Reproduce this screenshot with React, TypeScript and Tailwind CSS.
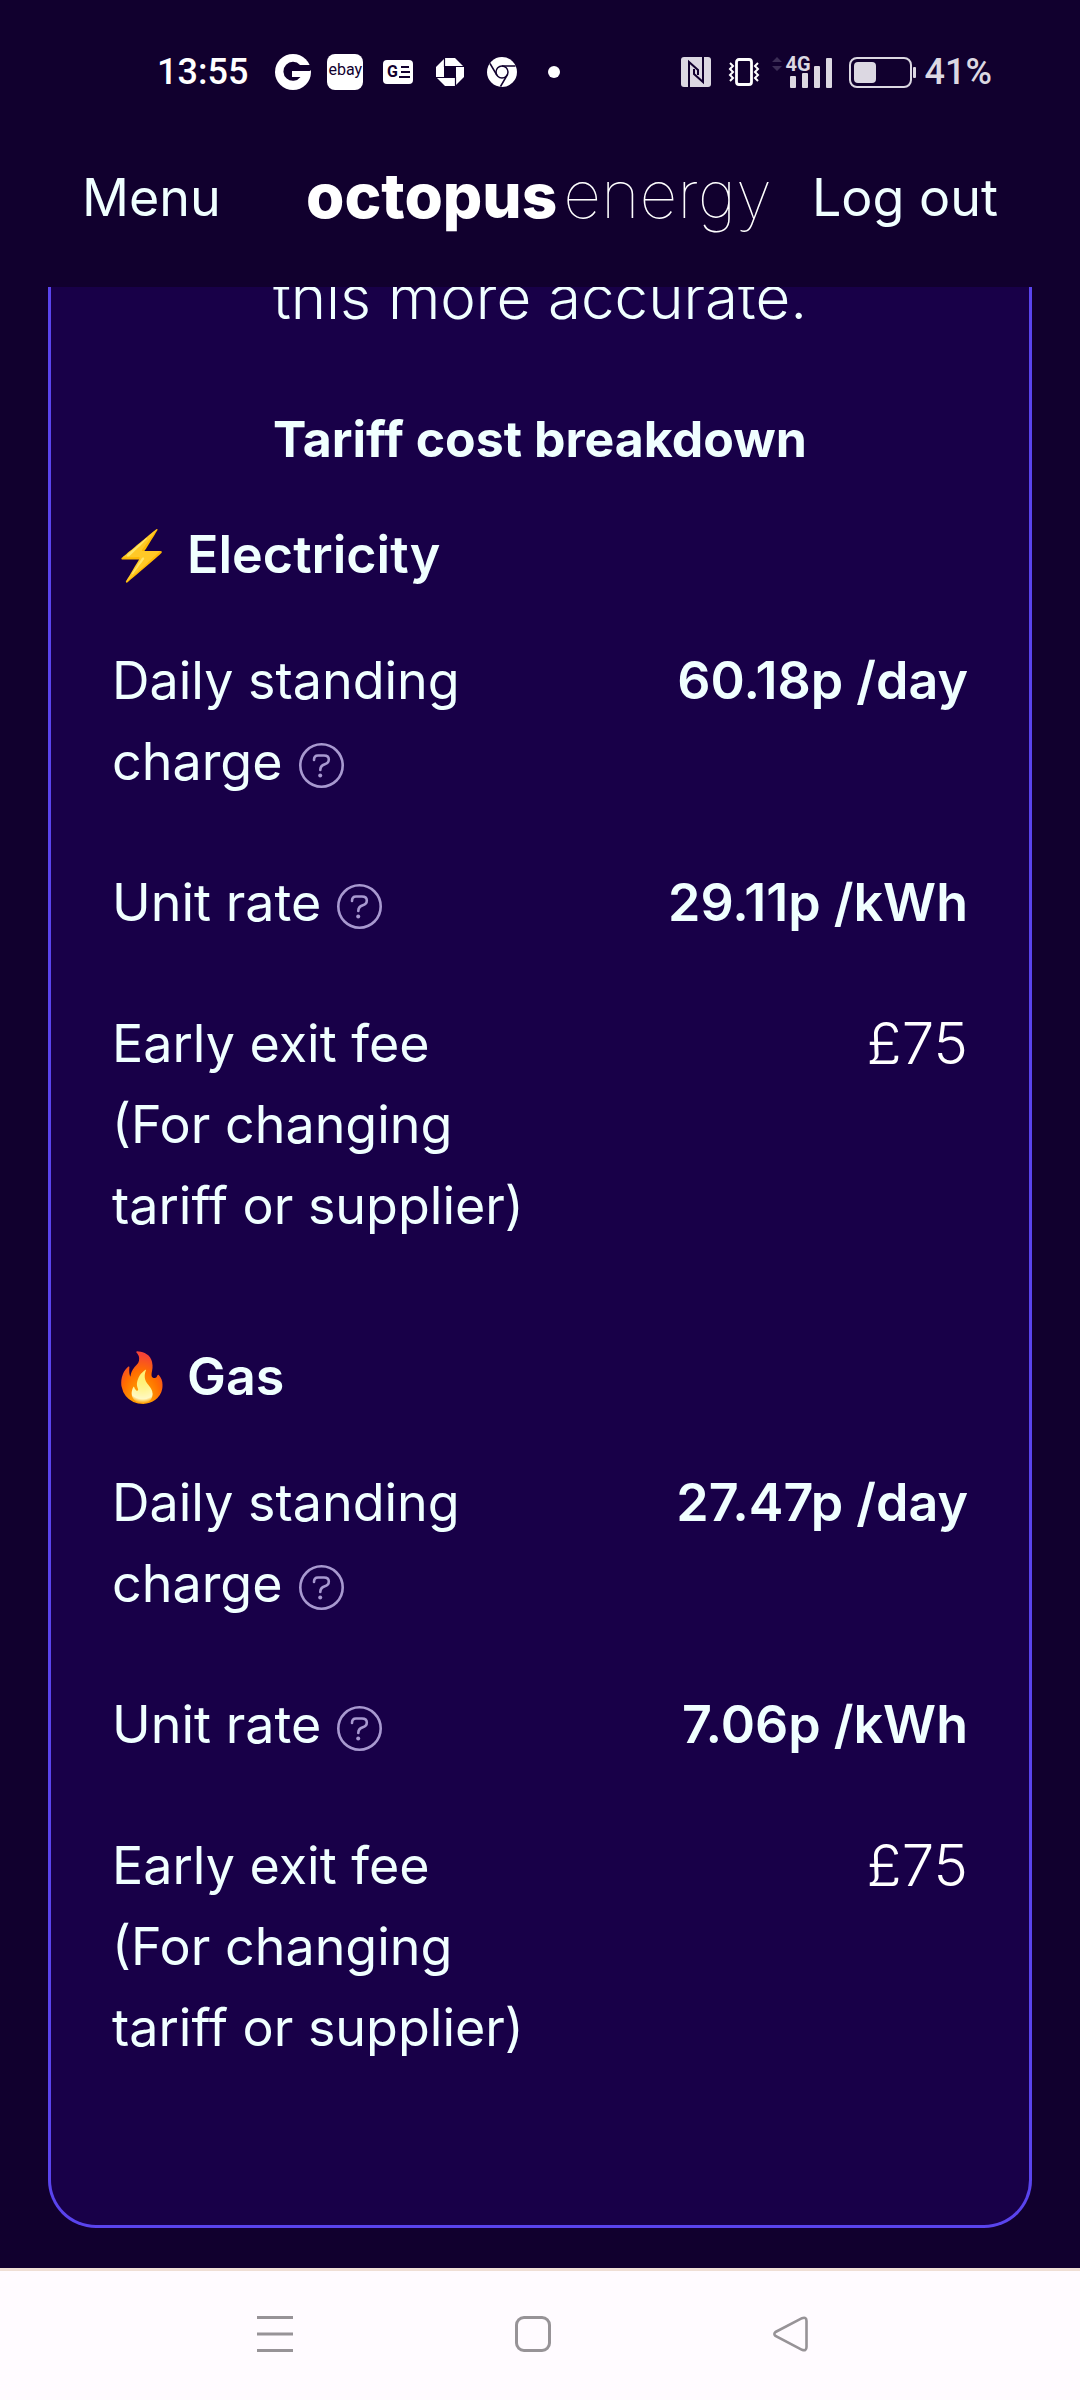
import React from 'react';

interface Rate {
  label: string;
  value: string;
  note?: string;
  help?: boolean;
  light?: boolean;
}

interface Fuel {
  emoji: string;
  name: string;
  rates: Rate[];
}

const EXIT_FEE: Rate = { label: 'Early exit fee', note: '(For changing tariff or supplier)', value: '£75', light: true };

const FUELS: Fuel[] = [
  {
    emoji: '⚡',
    name: 'Electricity',
    rates: [
      { label: 'Daily standing charge', value: '60.18p /day', help: true },
      { label: 'Unit rate', value: '29.11p /kWh', help: true },
      EXIT_FEE,
    ],
  },
  {
    emoji: '🔥',
    name: 'Gas',
    rates: [
      { label: 'Daily standing charge', value: '27.47p /day', help: true },
      { label: 'Unit rate', value: '7.06p /kWh', help: true },
      EXIT_FEE,
    ],
  },
];

const NotificationIcons = () => (
  <div className="flex items-center">
    <svg className="w-9 h-9 mr-4" viewBox="0 0 36 36">
      <circle cx="18" cy="18" r="18" fill="#fff" />
      <path d="M36 11H25a9.5 9.5 0 1 0 .5 12H17v-5.500h17L36 16z" fill="#11002e" />
      <path d="M17 17h18v5.500H17z" fill="#fff" />
    </svg>
    <div className="w-9 h-9 mr-5 rounded-lg bg-white text-[#11002e] text-base leading-8 text-center">ebay</div>
    <div className="w-[30px] h-6 mr-[23px] rounded-sm bg-white text-[#11002e] flex items-center justify-center gap-px">
      <span className="text-base leading-6 font-bold">G</span>
      <svg className="w-[11px] h-3" viewBox="0 0 11 12" stroke="#11002e" strokeWidth="2">
        <path d="M2 1h8M2 6h9M0 11h11" />
      </svg>
    </div>
    <svg className="w-7 h-7 mr-[23px]" viewBox="0 0 28 28">
      <path d="M9 0h10l9 9v10l-9 9H9l-9-9V9z" fill="#fff" />
      <path d="M8 8h12v12H8z" fill="#11002e" />
      <path d="M8.500 0v9M28 8.500H19M19.500 28V19M0 19.500h9" stroke="#11002e" strokeWidth="1.200" />
    </svg>
    <svg className="w-[30px] h-[30px] mr-[31px]" viewBox="0 0 30 30">
      <circle cx="15" cy="15" r="15" fill="#fff" />
      <circle cx="15" cy="15" r="6" fill="none" stroke="#11002e" strokeWidth="1.500" />
      <path d="M15 9H28.500M9.800 18L3 6.500M20.200 18L13.500 29.500" stroke="#11002e" strokeWidth="1.500" />
    </svg>
    <span className="w-3 h-3 rounded-full bg-white" />
  </div>
);

const SystemIcons = () => (
  <div className="flex items-center">
    {/* NFC */}
    <svg className="w-[30px] h-[30px] mr-[17px]" viewBox="0 0 30 30" fill="none">
      <rect width="30" height="30" rx="3" fill="#dcd8e2" />
      <path d="M8 30V5l9 8v5M22 0v25l-9-8v-5" stroke="#11002e" strokeWidth="2" />
    </svg>
    {/* Vibrate */}
    <svg className="w-8 h-[30px] mr-3" viewBox="0 0 32 30" fill="none" stroke="#fff">
      <rect x="8.500" y="2.500" width="15" height="25" rx="2.500" strokeWidth="2.800" />
      <path d="M2 6l3 3-3 3 3 3-3 3 3 3-3 3M30 6l-3 3 3 3-3 3 3 3-3 3 3 3" strokeWidth="2" />
    </svg>
    {/* Mobile signal */}
    <div className="relative w-[61px] h-8 mr-4">
      <svg className="w-full h-full" viewBox="0 0 61 32">
        <path d="M0 6l5-5 5 5zM0 10h10l-5 5z" fill="#3b2d55" />
        <g fill="#dcd8e2">
          <rect x="18" y="20" width="6" height="12" rx="1" />
          <rect x="30" y="17" width="6" height="15" rx="1" />
          <rect x="42" y="10" width="6" height="22" rx="1" />
          <rect x="54" y="2" width="6" height="30" rx="1" />
        </g>
      </svg>
      <span className="absolute left-3.5 -top-0.5 text-xl leading-5 font-bold">4G</span>
    </div>
    <svg className="w-[67px] h-[31px] mr-[9px]" viewBox="0 0 67 31">
      <rect x="1" y="1" width="61" height="29" rx="7" fill="none" stroke="#dcd8e2" strokeWidth="2" />
      <rect x="5" y="5" width="22" height="21" rx="4" fill="#dcd8e2" />
      <rect x="64" y="10" width="3" height="11" rx="1" fill="#dcd8e2" />
    </svg>
    <span className="text-4xl leading-10 font-medium">41%</span>
  </div>
);

const StatusBar = () => (
  <div className="flex items-center justify-between h-36 pl-[157px] pr-[88px] font-['Roboto',sans-serif] text-[#dcd8e2]">
    <div className="flex items-center gap-[27px]">
      <span className="text-4xl leading-10 font-medium text-white">13:55</span>
      <NotificationIcons />
    </div>
    <SystemIcons />
  </div>
);

const HelpButton = ({ label }: { label: string }) => (
  <button type="button" aria-label={`About ${label}`} className="ml-4 align-middle">
    <svg className="w-[45px] h-[45px]" viewBox="0 0 45 45" fill="none" stroke="#a899d0" strokeLinecap="round">
      <circle cx="22.500" cy="22.500" r="21.200" strokeWidth="2.600" />
      <path d="M15 17c0-3 1.500-4.500 4-4.500h6c3 0 4.800 1.500 4.800 4s-1.500 4-4 4.800c-3 .9-4.500 2-4.500 5.700" strokeWidth="2.600" />
      <circle cx="21.200" cy="32.500" r="2" fill="#a899d0" stroke="none" />
    </svg>
  </button>
);

const FuelSection = ({ fuel }: { fuel: Fuel }) => (
  <section>
    <h3 className="mb-[45px] flex items-center font-semibold">
      <span className="w-[75px] text-5xl leading-[81px]">{fuel.emoji}</span>
      {fuel.name}
    </h3>
    <dl className="flex flex-col gap-[60px]">
      {fuel.rates.map(rate => (
        <div key={rate.label} className="flex items-start justify-between">
          <dt className="w-[440px]">
            {rate.label}
            {rate.help && <HelpButton label={rate.label} />}
            {rate.note && <span className="block">{rate.note}</span>}
          </dt>
          {rate.light ? (
            <dd className="text-[58px] font-light text-white">{rate.value}</dd>
          ) : (
            <dd className="font-semibold">{rate.value}</dd>
          )}
        </div>
      ))}
    </dl>
  </section>
);

const NavBar = () => (
  <nav className="flex items-center justify-center gap-[222px] h-[132px] pr-3.5 pb-1 bg-[#fffbff] border-t-3 border-[#efdfd5]">
    <button type="button" aria-label="Recent apps">
      <svg className="w-9 h-9" viewBox="0 0 36 36" stroke="#979397" strokeWidth="3">
        <path d="M0 1.500h36M0 18h36M0 34.500h36" />
      </svg>
    </button>
    <button type="button" aria-label="Home">
      <svg className="w-9 h-9" viewBox="0 0 36 36" fill="none" stroke="#979397" strokeWidth="3">
        <rect x="1.500" y="1.500" width="33" height="33" rx="7.500" />
      </svg>
    </button>
    <button type="button" aria-label="Back">
      <svg className="w-9 h-9" viewBox="0 0 36 36" fill="none" stroke="#979397" strokeWidth="2.600">
        <path d="M2.500 16L29 2.200Q33.500 .5 33.500 5v26q0 4.500-4.500 2.800L2.500 20Q.2 18 2.500 16z" />
      </svg>
    </button>
  </nav>
);

export default function App() {
  return (
    <div className="min-h-screen flex flex-col bg-[#11002e] text-[#f0ffff] text-[52px] leading-[81px] font-['Inter',sans-serif]">
      <header className="relative z-10 h-[287px] bg-[#11002e]">
        <StatusBar />
        <div className="flex items-center h-[106px] px-[82px]">
          <button type="button">Menu</button>
          <a href="#" className="ml-auto mr-10 pb-1 flex items-baseline text-white whitespace-nowrap">
            <span className="text-[62px] font-extrabold">octopus</span>
            <span className="ml-1.5 text-[66px] font-thin">energy</span>
          </a>
          <button type="button">Log out</button>
        </div>
      </header>

      <main className="flex-1 px-12 pb-10">
        <div className="px-[61px] pb-[157px] border-x-3 border-b-3 border-[#5a44ee] rounded-b-[48px] bg-[#180048]">
          {/* Scrolled partly under the header */}
          <p className="-mt-[30px] mb-[61px] text-[60px] font-light text-center">this more accurate.</p>
          <h2 className="mb-[34px] text-[50px] font-bold text-center">Tariff cost breakdown</h2>
          <div className="flex flex-col gap-[90px]">
            {FUELS.map(fuel => (
              <FuelSection key={fuel.name} fuel={fuel} />
            ))}
          </div>
        </div>
      </main>

      <NavBar />
    </div>
  );
}
